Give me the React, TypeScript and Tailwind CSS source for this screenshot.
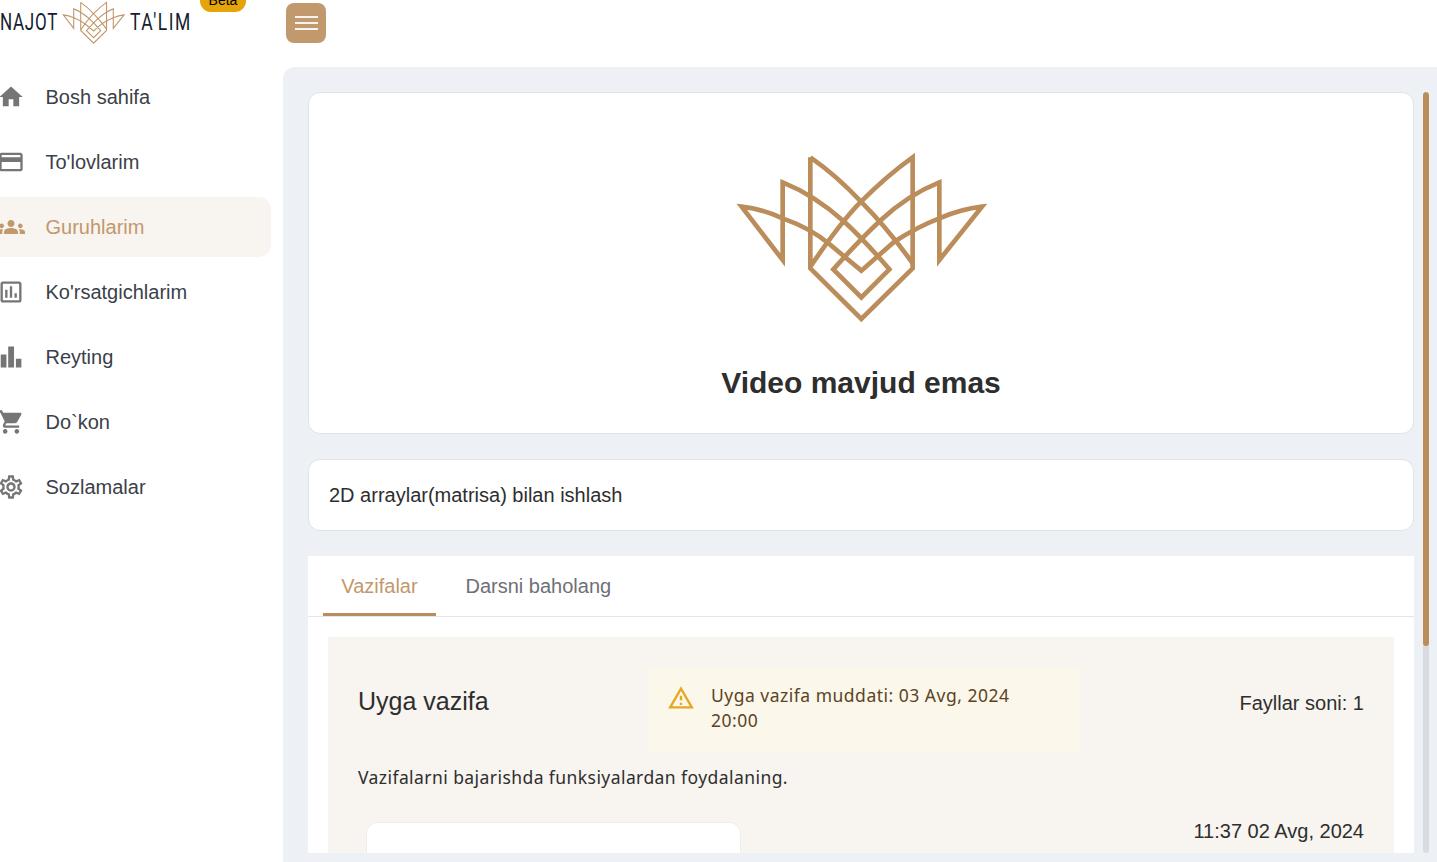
import React from "react";

const arial = "font-['Liberation_Sans',Arial,sans-serif]";

function Mark({ className, sw }: { className: string; sw: number }) {
  return (
    <svg viewBox="0 0 840 570" className={className} fill="none" stroke="currentColor" strokeWidth={sw} strokeMiterlimit={8}>
      <path d="M268 52V385L421 537L575 385V52Q500 105 420 185Q360 245 268 380" />
      <path d="M268 52Q345 105 420 185Q500 265 575 370" />
      <path d="M185 127V360L62 200Q125 207 185 235Q270 265 325 312L421 392L520 305Q590 260 655 235Q720 207 783 200L655 360V127Q560 165 480 240Q420 295 337 388L421 472L505 388Q430 300 370 245Q280 165 185 127Z" />
    </svg>
  );
}

const paths: Record<string, string> = {
  home: "M10 20v-6h4v6h5v-8h3L12 3 2 12h3v8z",
  card: "M20 4H4c-1.11 0-1.99.89-1.99 2L2 18c0 1.11.89 2 2 2h16c1.11 0 2-.89 2-2V6c0-1.11-.89-2-2-2zm0 14H4v-6h16v6zm0-10H4V6h16v2z",
  groups:
    "M12 12.75c1.63 0 3.07.39 4.24.9 1.08.48 1.76 1.56 1.76 2.73V18H6v-1.61c0-1.18.68-2.26 1.76-2.73 1.17-.52 2.61-.91 4.24-.91zM4 13c1.1 0 2-.9 2-2s-.9-2-2-2-2 .9-2 2 .9 2 2 2zm1.13 1.1c-.37-.06-.74-.1-1.13-.1-.99 0-1.93.21-2.78.58C.48 14.9 0 15.62 0 16.43V18h4.5v-1.61c0-.83.23-1.61.63-2.29zM20 13c1.1 0 2-.9 2-2s-.9-2-2-2-2 .9-2 2 .9 2 2 2zm4 3.43c0-.81-.48-1.53-1.22-1.85-.85-.37-1.79-.58-2.78-.58-.39 0-.76.04-1.13.1.4.68.63 1.46.63 2.29V18H24v-1.57zM12 6c1.66 0 3 1.34 3 3s-1.34 3-3 3-3-1.34-3-3 1.34-3 3-3z",
  stats:
    "M19 3H5c-1.1 0-2 .9-2 2v14c0 1.1.9 2 2 2h14c1.1 0 2-.9 2-2V5c0-1.1-.9-2-2-2zm0 16H5V5h14v14zM7 10h2v7H7zm4-3h2v10h-2zm4 6h2v4h-2z",
  bars: "M3.2 9.8h4.9V21H3.2zM9.6 3h5v18h-5zm6.6 10.5h4.7V21h-4.7z",
  cart: "M7 18c-1.1 0-1.99.9-1.99 2S5.9 22 7 22s2-.9 2-2-.9-2-2-2zM1 2v2h2l3.6 7.59-1.35 2.45c-.16.28-.25.61-.25.96 0 1.1.9 2 2 2h12v-2H7.42c-.14 0-.25-.11-.25-.25l.03-.12.9-1.63h7.45c.75 0 1.41-.41 1.75-1.03l3.58-6.47c.08-.14.12-.31.12-.48 0-.55-.45-1-1-1H5.21l-.94-2H1zm16 16c-1.1 0-1.99.9-1.99 2s.89 2 1.99 2 2-.9 2-2-.9-2-2-2z",
  gear: "M19.43 12.98c.04-.32.07-.64.07-.98 0-.34-.03-.66-.07-.98l2.11-1.65c.19-.15.24-.42.12-.64l-2-3.46c-.09-.16-.26-.25-.44-.25-.06 0-.12.01-.17.03l-2.49 1c-.52-.4-1.08-.73-1.69-.98l-.38-2.65C14.46 2.18 14.25 2 14 2h-4c-.25 0-.46.18-.49.42l-.38 2.65c-.61.25-1.17.59-1.69.98l-2.49-1c-.06-.02-.12-.03-.18-.03-.17 0-.34.09-.43.25l-2 3.46c-.13.22-.07.49.12.64l2.11 1.65c-.04.32-.07.65-.07.98 0 .33.03.66.07.98l-2.11 1.65c-.19.15-.24.42-.12.64l2 3.46c.09.16.26.25.44.25.06 0 .12-.01.17-.03l2.49-1c.52.4 1.08.73 1.69.98l.38 2.65c.03.24.24.42.49.42h4c.25 0 .46-.18.49-.42l.38-2.65c.61-.25 1.17-.59 1.69-.98l2.49 1c.06.02.12.03.18.03.17 0 .34-.09.43-.25l2-3.46c.12-.22.07-.49-.12-.64l-2.11-1.65zm-1.98-1.71c.04.31.05.52.05.73 0 .21-.02.43-.05.73l-.14 1.13.89.7 1.08.84-.7 1.21-1.27-.51-1.04-.42-.9.68c-.43.32-.84.56-1.25.73l-1.06.43-.16 1.13-.2 1.35h-1.4l-.19-1.35-.16-1.13-1.06-.43c-.43-.18-.83-.41-1.23-.71l-.91-.7-1.06.43-1.27.51-.7-1.21 1.08-.84.89-.7-.14-1.13c-.03-.31-.05-.54-.05-.74s.02-.43.05-.73l.14-1.13-.89-.7-1.08-.84.7-1.21 1.27.51 1.04.42.9-.68c.43-.32.84-.56 1.25-.73l1.06-.43.16-1.13.2-1.35h1.39l.19 1.35.16 1.13 1.06.43c.43.18.83.41 1.23.71l.91.7 1.06-.43 1.27-.51.7 1.21-1.07.85-.89.7.14 1.13zM12 8c-2.21 0-4 1.79-4 4s1.79 4 4 4 4-1.79 4-4-1.79-4-4-4zm0 6c-1.1 0-2-.9-2-2s.9-2 2-2 2 .9 2 2-.9 2-2 2z",
};

const nav = [
  { icon: "home", label: "Bosh sahifa" },
  { icon: "card", label: "To'lovlarim" },
  { icon: "groups", label: "Guruhlarim", active: true },
  { icon: "stats", label: "Ko'rsatgichlarim" },
  { icon: "bars", label: "Reyting" },
  { icon: "cart", label: "Do`kon" },
  { icon: "gear", label: "Sozlamalar" },
];

function Sidebar() {
  return (
    <aside className="w-[283px] shrink-0 pt-[67px] bg-white">
      <nav className="flex flex-col gap-[5px] w-[271px]">
        {nav.map((n) => (
          <div
            key={n.label}
            className={
              "h-[60px] flex items-center gap-[20.5px] -ml-[3px] rounded-r-xl " +
              (n.active ? "bg-[#f8f4f0] text-[#c2986d]" : "text-[#3b4149]")
            }
          >
            <svg viewBox="0 0 24 24" className={"w-7 h-7 shrink-0 fill-current " + (n.active ? "" : "text-[#757575]")}>
              <path d={paths[n.icon]} />
            </svg>
            <span className={arial + " text-[20px]"}>{n.label}</span>
          </div>
        ))}
      </nav>
    </aside>
  );
}

function Header() {
  const logo = "font-['Roboto',sans-serif] text-[23px] leading-none text-[#14202e] origin-left block mt-[2px]";
  return (
    <header className="h-[67px] flex items-start bg-white">
      <div className="w-[286px] shrink-0 h-[43px] flex items-center relative">
        <span className={logo + " w-[58px] tracking-[1px] scale-x-[.74]"}>NAJOT</span>
        <Mark className="w-[71px] h-[48px] -my-[3px] text-[#c2986d] shrink-0" sw={13} />
        <span className={logo + " ml-[1px] tracking-[2px] scale-x-[.76]"}>TA'LIM</span>
        <span className={arial + " absolute left-[200px] -top-[10px] w-[46px] h-[22px] rounded-[11px] bg-[#e5a50a] text-black text-[14px] text-center leading-[20px]"}>Beta</span>
      </div>
      <button className="mt-[3px] w-10 h-10 rounded-lg bg-[#c2986d] flex flex-col items-center justify-center gap-[4px]">
        <span className="block w-[23px] h-[2px] bg-[#f7f3ef]" />
        <span className="block w-[23px] h-[2px] bg-[#f7f3ef]" />
        <span className="block w-[23px] h-[2px] bg-[#f7f3ef]" />
      </button>
    </header>
  );
}

function Content() {
  return (
    <main className="flex-1 min-w-0 h-[795px] bg-[#edf0f5] rounded-tl-xl pt-[25px] pl-[25px] pb-[9px] flex">
      <div className={"w-[1106px] shrink-0 flex flex-col gap-[25px] overflow-hidden " + arial}>
        <section className="h-[342px] shrink-0 bg-white border border-[#dfe2e8] rounded-xl flex flex-col items-center pt-[47px]">
          <Mark className="w-[280px] h-[190px] shrink-0 text-[#bb8d5a]" sw={14} />
          <h1 className="mt-[34px] text-[30px] leading-[38px] font-bold text-[#2e2e2e]">Video mavjud emas</h1>
        </section>
        <section className="h-[72px] shrink-0 bg-white border border-[#dfe2e8] rounded-xl flex items-center pl-5">
          <p className="text-[20px] text-[#2e2e2e]">2D arraylar(matrisa) bilan ishlash</p>
        </section>
        <section className="flex-1 min-h-0 bg-white flex flex-col overflow-hidden">
          <div className="h-[61px] shrink-0 border-b border-[#e3e5e8] flex pl-[15px] text-[20px]">
            <div className="w-[113px] h-[60px] border-b-[3px] pt-[3px] border-[#bb8d5a] flex items-center justify-center text-[#c2986d]">Vazifalar</div>
            <div className="ml-[11.5px] px-[18px] h-[60px] flex items-center text-[#6f6f76]">Darsni baholang</div>
          </div>
          <div className="mt-5 mx-5 flex-1 min-h-0 bg-[#f8f4f0] px-[30px] pt-[31px] overflow-hidden">
            <div className="flex items-start justify-between">
              <h2 className="w-[290px] mt-[16px] text-[25px] leading-[34px] text-[#2e2e2e]">Uyga vazifa</h2>
              <div className="w-[432px] h-[84px] rounded bg-[#fbf7ea] flex gap-4 pl-5 pt-[15px] font-['Noto_Sans',sans-serif] text-[17.5px] tracking-[.5px] leading-[24.5px] text-[#5c4326]">
                <svg viewBox="0 0 24 24" className="w-7 h-7 shrink-0 mt-[1px] fill-[#e5a823] -ml-[1px]"><path d="M12 5.99 19.53 19H4.47L12 5.99M12 2 1 21h22L12 2zm1 14h-2v2h2v-2zm0-6h-2v4h2v-4z" /></svg>
                <p className="w-[320px]">Uyga vazifa muddati: 03 Avg, 2024 20:00</p>
              </div>
              <p className="ml-auto mt-[21px] text-[20px] leading-[28px] text-[#2e2e2e]">Fayllar soni: 1</p>
            </div>
            <p className="mt-[13px] font-['Noto_Sans',sans-serif] text-[17.5px] tracking-[.43px] leading-[24px] text-[#2e2e2e]">Vazifalarni bajarishda funksiyalardan foydalaning.</p>
            <div className="mt-[33px] flex items-start justify-between">
              <div className="ml-2 w-[375px] h-[60px] bg-white rounded-t-xl border border-[#f1eeea]" />
              <p className="-mt-[5px] text-[20px] leading-[28px] text-[#2e2e2e]">11:37 02 Avg, 2024</p>
            </div>
          </div>
        </section>
      </div>
      <div className="ml-[9px] w-[6px] h-[761px] bg-[#d9dbe0] rounded-full overflow-hidden">
        <div className="w-full h-[554px] bg-[#bb8d5a] rounded-full" />
      </div>
    </main>
  );
}

export default function App() {
  return (
    <div className="w-[1437px] h-[862px] overflow-hidden bg-white flex flex-col">
      <Header />
      <div className="flex -mt-[67px]">
        <Sidebar />
        <div className="flex-1 min-w-0 pt-[67px]">
          <Content />
        </div>
      </div>
    </div>
  );
}
